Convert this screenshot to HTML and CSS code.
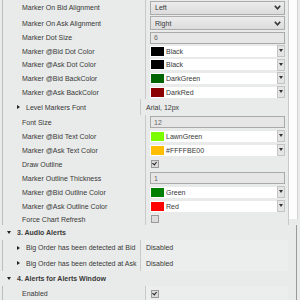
FILE: index.html
```html
<!DOCTYPE html>
<html lang="en">
<head>
  <meta charset="UTF-8">
  <meta name="viewport" content="width=device-width, initial-scale=1.0">
  <title>Indicator Properties</title>
  <link rel="stylesheet" href="styles.css">
</head>
<body>

  <div class="panel">
    <div class="rows">

      <div class="row h15">
        <div class="name">Marker On Bid Alignment</div>
        <div class="val"><div class="combo">Left<svg class="chev" width="7" height="5" viewBox="0 0 7 5"><polyline points="0.8,0.8 3.5,3.8 6.2,0.8" fill="none" stroke="#333" stroke-width="1.6"/></svg></div></div>
      </div>
      <div class="row h16">
        <div class="name">Marker On Ask Alignment</div>
        <div class="val"><div class="combo">Right<svg class="chev" width="7" height="5" viewBox="0 0 7 5"><polyline points="0.8,0.8 3.5,3.8 6.2,0.8" fill="none" stroke="#333" stroke-width="1.6"/></svg></div></div>
      </div>
      <div class="row h13">
        <div class="name">Marker Dot Size</div>
        <div class="val"><div class="field">6</div></div>
      </div>
      <div class="row h14">
        <div class="name">Marker @Bid Dot Color</div>
        <div class="val"><div class="color"><span class="swatch black"></span><span class="cname">Black</span><span class="drop"></span></div></div>
      </div>
      <div class="row h13">
        <div class="name">Marker @Ask Dot Color</div>
        <div class="val"><div class="color"><span class="swatch black"></span><span class="cname">Black</span><span class="drop"></span></div></div>
      </div>
      <div class="row h14">
        <div class="name">Marker @Bid BackColor</div>
        <div class="val"><div class="color"><span class="swatch dkgreen"></span><span class="cname">DarkGreen</span><span class="drop"></span></div></div>
      </div>
      <div class="row h14">
        <div class="name">Marker @Ask BackColor</div>
        <div class="val"><div class="color"><span class="swatch dkred"></span><span class="cname">DarkRed</span><span class="drop"></span></div></div>
      </div>
      <div class="row h16">
        <div class="name sub"><span class="tri-right"></span>Level Markers Font</div>
        <div class="val"><span class="plain">Arial, 12px</span></div>
      </div>
      <div class="row h14">
        <div class="name">Font Size</div>
        <div class="val"><div class="field">12</div></div>
      </div>
      <div class="row h14">
        <div class="name">Marker @Bid Text Color</div>
        <div class="val"><div class="color"><span class="swatch lawn"></span><span class="cname">LawnGreen</span><span class="drop"></span></div></div>
      </div>
      <div class="row h14">
        <div class="name">Marker @Ask Text Color</div>
        <div class="val"><div class="color"><span class="swatch amber"></span><span class="cname">#FFFFBE00</span><span class="drop"></span></div></div>
      </div>
      <div class="row h14">
        <div class="name">Draw Outline</div>
        <div class="val"><span class="check on"></span></div>
      </div>
      <div class="row h14">
        <div class="name">Marker Outline Thickness</div>
        <div class="val"><div class="field">1</div></div>
      </div>
      <div class="row h14">
        <div class="name">Marker @Bid Outline Color</div>
        <div class="val"><div class="color"><span class="swatch green"></span><span class="cname">Green</span><span class="drop"></span></div></div>
      </div>
      <div class="row h14">
        <div class="name">Marker @Ask Outline Color</div>
        <div class="val"><div class="color"><span class="swatch red"></span><span class="cname">Red</span><span class="drop"></span></div></div>
      </div>
      <div class="row h12">
        <div class="name">Force Chart Refresh</div>
        <div class="val"><span class="check"></span></div>
      </div>

    </div>
    <div class="scroll"></div>
  </div>

  <div class="lower">
    <div class="head"><span class="tri-down"></span>3. Audio Alerts</div>
    <div class="row h15">
      <div class="name sub"><span class="tri-right"></span>Big Order has been detected at Bid</div>
      <div class="val light"><span class="plain">Disabled</span></div>
    </div>
    <div class="row h16">
      <div class="name sub"><span class="tri-right"></span>Big Order has been detected at Ask</div>
      <div class="val light"><span class="plain">Disabled</span></div>
    </div>
    <div class="head"><span class="tri-down"></span>4. Alerts for Alerts Window</div>
    <div class="row h15">
      <div class="name">Enabled</div>
      <div class="val light"><span class="check on"></span></div>
    </div>
  </div>

</body>
</html>
```

FILE: styles.css
```css
body{
  margin:0;
  background-color:#e9ebea;
  font-family:"Liberation Sans", Arial, sans-serif;
  font-size:7px;
  color:#383838;
}
.panel{
  display:flex;
  width:300px;
}
.rows{
  margin-left:2px;
  width:285px;
  border-left:1px solid #bcbcbc;
  border-right:1px solid #c9c9c9;
}
.scroll{
  width:8px;
  height:219px;
  background-color:#fdfdfd;
  border-right:1px solid #d5d5d5;
}
.row{
  display:flex;
  align-items:center;
}
.h12{ height:12px; }
.h13{ height:13px; }
.h14{ height:14px; }
.h15{ height:15px; }
.h16{ height:16px; }
.name{
  width:123px;
  padding-left:19px;
  height:100%;
  display:flex;
  align-items:center;
  border-right:1px solid #c9c9c9;
  white-space:nowrap;
  overflow:hidden;
}
.name.sub{
  padding-left:14px;
}
.val{
  flex:1;
  height:100%;
  display:flex;
  align-items:center;
  padding-left:4px;
  padding-right:3px;
}
.combo{
  flex:1;
  height:12px;
  display:flex;
  align-items:center;
  justify-content:space-between;
  padding:0 3px 0 4px;
  border:1px solid #acacac;
  background:linear-gradient(#ececec, #dcdcdc);
}
.field{
  flex:1;
  height:10px;
  display:flex;
  align-items:center;
  padding-left:3px;
  border:1px solid #a9a9a9;
  background-color:#e6e6e6;
  color:#666;
}
.color{
  flex:1;
  height:11px;
  display:flex;
  align-items:center;
  background-color:#fff;
}
.swatch{
  width:13px;
  height:9px;
  margin:0 2px 0 1px;
}
.black{ background-color:#000; }
.dkgreen{ background-color:#006400; }
.dkred{ background-color:#8b0000; }
.lawn{ background-color:#7cfc00; }
.amber{ background-color:#ffbe00; }
.green{ background-color:#008000; }
.red{ background-color:#ff0000; }
.cname{
  flex:1;
}
.drop{
  width:6px;
  height:10px;
  border:1px solid #c4c4c4;
  background-color:#e4e4e4;
  position:relative;
}
.drop::after{
  content:"";
  position:absolute;
  left:1px;
  top:3px;
  border-left:2px solid transparent;
  border-right:2px solid transparent;
  border-top:3px solid #333;
}
.plain{
  padding-left:1px;
}
.check{
  width:6px;
  height:6px;
  margin-left:1px;
  border:1px solid #9a9a9a;
  background-color:#dcdcdc;
  position:relative;
}
.check.on::after{
  content:"";
  position:absolute;
  left:1px;
  top:0px;
  width:2px;
  height:3px;
  border-right:1px solid #222;
  border-bottom:1px solid #222;
  transform:rotate(40deg);
}
.tri-right{
  width:0;
  height:0;
  margin-right:6px;
  border-top:2.5px solid transparent;
  border-bottom:2.5px solid transparent;
  border-left:3px solid #222;
}
.tri-down{
  width:0;
  height:0;
  margin-right:6px;
  border-left:2.5px solid transparent;
  border-right:2.5px solid transparent;
  border-top:3px solid #222;
}
.lower{
  width:296px;
  border-right:1px solid #999;
}
.lower .row{
  margin-left:2px;
  border-left:1px solid #bcbcbc;
  width:285px;
}
.val.light{
  background-color:#eceeed;
}
.head{
  height:15px;
  display:flex;
  align-items:center;
  padding-left:7px;
  font-weight:bold;
}
```
